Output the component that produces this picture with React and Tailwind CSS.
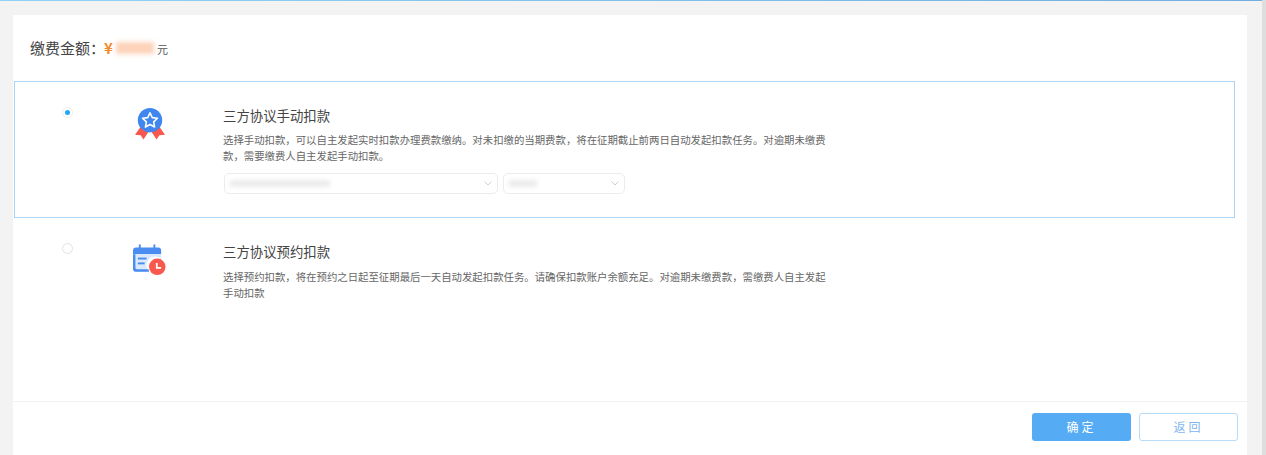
const F = '"Noto Sans CJK SC","Liberation Sans",sans-serif';

function Medal() {
  return (
    <svg width="30" height="33" viewBox="0 0 32 34">
      <path d="M7 19 L0 29 L6 29.500 L9 34 L15 25 Z" fill="#f9584c" />
      <path d="M25 19 L32 29 L26 29.500 L23 34 L17 25 Z" fill="#f9584c" />
      <circle cx="16" cy="13.500" r="13" fill="#3f87ee" />
      <path d="M16 5.500 L18.400 10.700 L24 11.400 L19.900 15.200 L20.900 20.800 L16 18 L11.100 20.800 L12.100 15.200 L8 11.400 L13.600 10.700 Z" fill="none" stroke="#fff" strokeWidth="1.700" strokeLinejoin="round" />
    </svg>
  );
}

function Calendar() {
  return (
    <svg width="33" height="32" viewBox="0 0 34 32">
      <path d="M3 3 H26 A3 3 0 0 1 29 6 V10 H0 V6 A3 3 0 0 1 3 3 Z" fill="#4a8df0" />
      <rect x="6" y="0" width="2" height="5" fill="#4a8df0" />
      <rect x="21" y="0" width="2" height="5" fill="#4a8df0" />
      <path d="M0 10 H29 V15 A9 9 0 0 0 16.500 28 H3 A3 3 0 0 1 0 25 Z" fill="#dce9fc" />
      <path d="M0 10 H2.500 V24 A1.500 1.500 0 0 0 4 25.500 H16 L16.500 28 H3 A3 3 0 0 1 0 25 Z" fill="#4a8df0" />
      <rect x="5" y="13.500" width="9" height="2" fill="#4a8df0" />
      <rect x="5" y="18.500" width="7" height="2" fill="#4a8df0" />
      <circle cx="25" cy="23" r="8.500" fill="#f9584c" />
      <path d="M24.500 19 V24 H29" fill="none" stroke="#fff" strokeWidth="1.800" />
    </svg>
  );
}

function Chevron() {
  return (
    <svg width="8" height="5" viewBox="0 0 8 5" className="shrink-0">
      <path d="M0.500 0.500 L4 4 L7.500 0.500" fill="none" stroke="#cfcfcf" strokeWidth="1" />
    </svg>
  );
}

function Select({ width, blurWidth }) {
  return (
    <div className="flex h-[21px] items-center justify-between rounded-[5px] border border-[#ececec] bg-white pl-[5px] pr-[5px]" style={{ width }}>
      <div className="h-[7px] bg-[#ebebeb] blur-[2px]" style={{ width: blurWidth }} />
      <Chevron />
    </div>
  );
}

function Option({ selected, icon, title, lines, children, h }) {
  return (
    <div className={`flex ${h} border ${selected ? 'border-[#a9d4f5]' : 'border-transparent'}`}>
      <div className={`w-[106px] shrink-0 pl-[47px] ${selected ? 'pt-[25px]' : 'pt-[24px]'}`}>
        <div className={`flex h-[11px] w-[11px] items-center justify-center rounded-full border ${selected ? 'border-[#ececec]' : 'border-[#e2e2e2]'} bg-white`}>
          {selected && <div className="h-[5px] w-[5px] rounded-full bg-[#1fa8f5]" />}
        </div>
      </div>
      <div className={`w-[102px] shrink-0 pt-[25px] ${selected ? 'pl-[14px]' : 'pl-[12px]'}`}>{icon}</div>
      <div className={`w-[640px] ${selected ? 'pt-[22px]' : 'pt-[21px]'}`}>
        <div className="text-[13.400px] leading-[22px] text-[#444]">{title}</div>
        <div className={`text-[10.400px] leading-[16px] text-[#666] ${selected ? 'mt-[6px]' : 'mt-[7px]'}`}>
          {lines.map((l) => (<div key={l} className="whitespace-nowrap">{l}</div>))}
        </div>
        {children}
      </div>
    </div>
  );
}

export default function App() {
  return (
    <div className="relative h-[455px] w-[1266px] overflow-hidden bg-[#f3f3f3]" style={{ fontFamily: F }}>
      <div className="h-px w-full bg-linear-to-r from-[#8fd3f7] to-[#72aee0]" />
      <div className="ml-[13px] mt-[14px] flex h-[440px] w-[1234px] flex-col bg-white">
        <div className="flex h-[66px] items-center pl-[17px]">
          <span className="text-[15px] text-[#444]">缴费金额：</span>
          <span className="ml-[-1px] text-[15px] font-bold text-[#f58a2e]">¥</span>
          <div className="ml-[3px] h-[12px] w-[38px] bg-[#fdd3bb] blur-[2px]" />
          <span className="ml-[3px] mt-[2px] text-[11px] text-[#555]">元</span>
        </div>
        <div className="ml-px w-[1221px]">
          <Option
            selected
            h="h-[137px]"
            icon={<Medal />}
            title="三方协议手动扣款"
            lines={['选择手动扣款，可以自主发起实时扣款办理费款缴纳。对未扣缴的当期费款，将在征期截止前两日自动发起扣款任务。对逾期未缴费', '款，需要缴费人自主发起手动扣款。']}
          >
            <div className="ml-px mt-[9px] flex gap-[5px]">
              <Select width="274px" blurWidth="100px" />
              <Select width="122px" blurWidth="28px" />
            </div>
          </Option>
          <Option
            h="h-[183px]"
            icon={<Calendar />}
            title="三方协议预约扣款"
            lines={['选择预约扣款，将在预约之日起至征期最后一天自动发起扣款任务。请确保扣款账户余额充足。对逾期未缴费款，需缴费人自主发起', '手动扣款']}
          />
        </div>
        <div className="flex flex-1 items-start justify-end gap-[8px] border-t border-[#f2f2f2] pr-[9px] pt-[11px]">
          <button className="flex h-[28px] w-[99px] items-center justify-center rounded-[3px] bg-[#55acf5] text-[12px] tracking-[3px] text-white">确定</button>
          <button className="flex h-[28px] w-[99px] items-center justify-center rounded-[3px] border border-[#b5dcfa] bg-white text-[12px] tracking-[3px] text-[#7fb6ef]">返回</button>
        </div>
      </div>
      <div className="absolute right-0 top-0 h-full w-[4px] bg-[#dedede]" />
    </div>
  );
}
